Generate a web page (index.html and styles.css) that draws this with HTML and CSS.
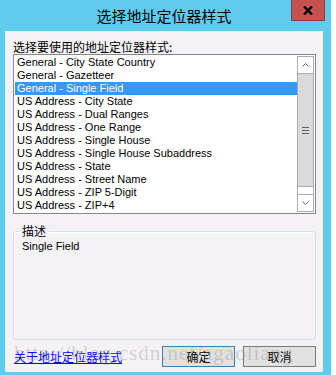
FILE: index.html
```html
<!DOCTYPE html>
<html lang="zh-CN">
<head>
    <meta charset="UTF-8">
    <title>选择地址定位器样式</title>
    <link rel="stylesheet" href="styles.css">
</head>
<body>
    <div class="window">
        <div class="titlebar">
            <span></span>
            <span class="title">选择地址定位器样式</span>
            <button class="close" aria-label="关闭">
                <svg width="10" height="9" viewBox="0 0 10 9"><path d="M1 0.5 L9 8.5 M9 0.5 L1 8.5" stroke="#000" stroke-width="2.4" fill="none"/></svg>
            </button>
        </div>

        <div class="client">
            <div class="prompt">选择要使用的地址定位器样式:</div>

            <div class="listbox">
                <ul class="items">
                    <li>General - City State Country</li>
                    <li>General - Gazetteer</li>
                    <li class="selected">General - Single Field</li>
                    <li>US Address - City State</li>
                    <li>US Address - Dual Ranges</li>
                    <li>US Address - One Range</li>
                    <li>US Address - Single House</li>
                    <li>US Address - Single House Subaddress</li>
                    <li>US Address - State</li>
                    <li>US Address - Street Name</li>
                    <li>US Address - ZIP 5-Digit</li>
                    <li>US Address - ZIP+4</li>
                </ul>
                <div class="scrollbar">
                    <div class="sb-btn up">
                        <svg width="7" height="4" viewBox="0 0 7 4"><path d="M0.5 3.5 L3.5 0.5 L6.5 3.5" stroke="#606060" fill="none"/></svg>
                    </div>
                    <div class="thumb">
                        <svg width="7" height="7" viewBox="0 0 7 7"><rect x="0" y="0" width="7" height="1" fill="#606060"/><rect x="0" y="3" width="7" height="1" fill="#606060"/><rect x="0" y="6" width="7" height="1" fill="#606060"/></svg>
                    </div>
                    <div class="track"></div>
                    <div class="sb-btn down">
                        <svg width="7" height="4" viewBox="0 0 7 4"><path d="M0.5 0.5 L3.5 3.5 L6.5 0.5" stroke="#606060" fill="none"/></svg>
                    </div>
                </div>
            </div>

            <fieldset class="desc">
                <legend>描述</legend>
                <div class="desc-text">Single Field</div>
            </fieldset>

            <div class="footer">
                <a href="#" class="help-link">关于地址定位器样式</a>
                <div class="buttons">
                    <button class="btn default">确定</button>
                    <button class="btn">取消</button>
                </div>
            </div>
        </div>

        <div class="watermark">http://blog.csdn.net/agaoliang</div>
    </div>
</body>
</html>
```

FILE: styles.css
```css
* {
    box-sizing: border-box;
}

body {
    margin: 0;
    background: #fff;
    font-family: "Liberation Sans", "Noto Sans CJK SC", sans-serif;
    font-size: 12px;
    color: #000;
}

.window {
    position: relative;
    width: 331px;
    height: 375px;
    background: #5ecbef;
    padding: 0 8px 3px 5px;
    display: flex;
    flex-direction: column;
    overflow: hidden;
}

.titlebar {
    height: 31px;
    display: grid;
    grid-template-columns: 1fr auto 1fr;
}

.title {
    font-family: "Noto Sans CJK SC", sans-serif;
    font-size: 15px;
    line-height: 31px;
    color: #000;
}

.close {
    justify-self: end;
    align-self: start;
    margin-right: -2px;
    width: 34px;
    height: 21px;
    padding: 0;
    background: #c75050;
    border: 1px solid #8d3b3b;
    border-top: none;
    display: flex;
    align-items: center;
    justify-content: center;
}

.client {
    flex: 1;
    background: #f5f2f6;
    padding: 8px 7px 5px 8px;
    display: flex;
    flex-direction: column;
}

.prompt {
    font-family: "Noto Sans CJK SC", sans-serif;
    font-size: 12px;
    line-height: 15px;
}

.listbox {
    height: 160px;
    border: 1px solid #828790;
    background: #fff;
    padding: 1px;
    display: flex;
}

.items {
    flex: 1;
    list-style: none;
    margin: 0;
    padding: 0;
}

.items li {
    height: 13px;
    line-height: 13px;
    padding-left: 2px;
    font-size: 11px;
    white-space: nowrap;
}

.items li.selected {
    background: #3399ff;
    color: #fff;
}

.scrollbar {
    width: 17px;
    border: 1px solid #acacac;
    display: flex;
    flex-direction: column;
    background: #fff;
}

.sb-btn {
    height: 17px;
    display: flex;
    align-items: center;
    justify-content: center;
}

.sb-btn.up {
    border-bottom: 1px solid #acacac;
}

.sb-btn.down {
    border-top: 1px solid #acacac;
}

.thumb {
    height: 113px;
    background: #dadada;
    border-bottom: 1px solid #acacac;
    display: flex;
    align-items: center;
    justify-content: center;
}

.track {
    flex: 1;
}

.desc {
    flex: 1;
    margin: 10px 0 0 0;
    padding: 2px 5px 0 5px;
    border: 1px solid #d5dfe5;
    border-radius: 3px;
    box-shadow: inset 1px 1px 0 #fff;
    min-width: 0;
}

.desc legend {
    font-family: "Noto Sans CJK SC", sans-serif;
    font-size: 12px;
    line-height: 14px;
    padding: 0 3px;
}

.desc-text {
    margin-left: 3px;
    font-size: 11px;
    line-height: 13px;
}

.footer {
    margin-top: 6px;
    display: flex;
    align-items: center;
    justify-content: space-between;
}

.help-link {
    margin-left: 1px;
    font-family: "Noto Sans CJK SC", sans-serif;
    font-size: 12px;
    color: #0000ff;
    text-decoration: underline;
}

.buttons {
    display: flex;
    gap: 8px;
}

.btn {
    width: 73px;
    height: 21px;
    padding: 0;
    background: #e1e1e1;
    border: 1px solid #7a7a7a;
    font-family: "Noto Sans CJK SC", sans-serif;
    font-size: 12px;
    color: #000;
}

.btn.default {
    border-color: #3c7fb1;
}

.watermark {
    position: absolute;
    left: 14px;
    top: 341px;
    font-family: "Liberation Serif", serif;
    font-size: 21px;
    letter-spacing: 1px;
    color: rgba(140, 140, 140, 0.35);
    white-space: nowrap;
    pointer-events: none;
}
```
